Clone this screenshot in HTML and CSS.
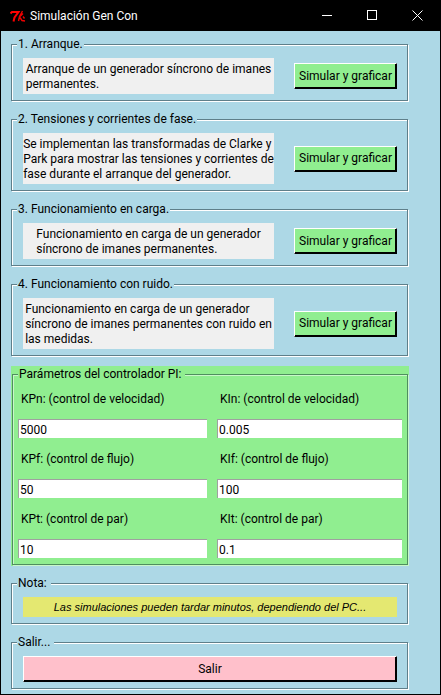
FILE: index.html
```html
<!DOCTYPE html>
<html lang="es">
<head>
    <meta charset="UTF-8">
    <meta name="viewport" content="width=device-width, initial-scale=1.0">
    <title>Simulación Gen Con</title>
    <link rel="stylesheet" href="styles.css">
</head>
<body>
    <div class="window">
        <header class="titlebar">
            <svg class="tk-icon" width="16" height="14" viewBox="0 0 16 14">
                <path d="M0.5 4.5 L2 3 L8.5 3 L4.5 8.5 L3.5 12.5" stroke="#f00" stroke-width="2" fill="none"/>
                <path d="M12.5 2 L9.5 7.5 L8.5 12 M10 7.5 L13 4.5 M10 8.5 L12 11.5 L15 12 M13 7.5 L14.5 9.5" stroke="#e00" stroke-width="1.4" fill="none"/>
            </svg>
            <span class="title-text">Simulación Gen Con</span>
            <div class="controls">
                <span class="control">
                    <svg width="11" height="11" viewBox="0 0 11 11"><path d="M0 5.5 H10" stroke="#fff" fill="none"/></svg>
                </span>
                <span class="control">
                    <svg width="11" height="11" viewBox="0 0 11 11"><rect x="0.5" y="0.5" width="9" height="9" stroke="#fff" fill="none"/></svg>
                </span>
                <span class="control">
                    <svg width="11" height="11" viewBox="0 0 11 11"><path d="M0.5 0.5 L10.5 10.5 M10.5 0.5 L0.5 10.5" stroke="#fff" fill="none"/></svg>
                </span>
            </div>
        </header>

        <main class="content">
            <section class="frame">
                <span class="frame-title">1. Arranque.</span>
                <div class="row">
                    <p class="msg"><span>Arranque de un generador síncrono de imanes<br>permanentes.</span></p>
                    <button class="btn-sim">Simular y graficar</button>
                </div>
            </section>

            <section class="frame">
                <span class="frame-title">2. Tensiones y corrientes de fase.</span>
                <div class="row">
                    <p class="msg"><span>Se implementan las transformadas de Clarke y<br>Park para mostrar las tensiones y corrientes de<br>fase durante el arranque del generador.</span></p>
                    <button class="btn-sim">Simular y graficar</button>
                </div>
            </section>

            <section class="frame">
                <span class="frame-title">3. Funcionamiento en carga.</span>
                <div class="row">
                    <p class="msg"><span>Funcionamiento en carga de un generador<br>síncrono de imanes permanentes.</span></p>
                    <button class="btn-sim">Simular y graficar</button>
                </div>
            </section>

            <section class="frame">
                <span class="frame-title">4. Funcionamiento con ruido.</span>
                <div class="row">
                    <p class="msg"><span>Funcionamiento en carga de un generador<br>síncrono de imanes permanentes con ruido en<br>las medidas.</span></p>
                    <button class="btn-sim">Simular y graficar</button>
                </div>
            </section>

            <div class="pi-panel">
                <section class="frame pi-frame">
                    <span class="frame-title pi-title">Parámetros del controlador PI:&nbsp;</span>
                    <div class="pi-grid">
                        <div class="param">
                            <label for="kpn">KPn: (control de velocidad)</label>
                            <input type="text" id="kpn" value="5000">
                        </div>
                        <div class="param">
                            <label for="kin">KIn: (control de velocidad)</label>
                            <input type="text" id="kin" value="0.005">
                        </div>
                        <div class="param">
                            <label for="kpf">KPf: (control de flujo)</label>
                            <input type="text" id="kpf" value="50">
                        </div>
                        <div class="param">
                            <label for="kif">KIf: (control de flujo)</label>
                            <input type="text" id="kif" value="100">
                        </div>
                        <div class="param">
                            <label for="kpt">KPt: (control de par)</label>
                            <input type="text" id="kpt" value="10">
                        </div>
                        <div class="param">
                            <label for="kit">KIt: (control de par)</label>
                            <input type="text" id="kit" value="0.1">
                        </div>
                    </div>
                </section>
            </div>

            <section class="frame">
                <span class="frame-title">Nota:&nbsp;</span>
                <p class="note">Las simulaciones pueden tardar minutos, dependiendo del PC...</p>
            </section>

            <section class="frame frame-last">
                <span class="frame-title">Salir...&nbsp;</span>
                <button class="btn-exit">Salir</button>
            </section>
        </main>
    </div>
</body>
</html>
```

FILE: styles.css
```css
* { box-sizing: border-box; }
html, body { margin: 0; padding: 0; }
body { font-family: Roboto, Arial, sans-serif; font-size: 12px; line-height: 15px; color: #000; }

.window { width: 441px; height: 695px; background-color: #add8e6; border: 1px solid #000; border-top: none; overflow: hidden; }

.titlebar { display: flex; align-items: center; height: 31px; background-color: #000; color: #fff; padding-left: 9px; }
.tk-icon { margin-right: 4px; }
.title-text { font-size: 12px; padding-top: 1px; }
.controls { display: flex; margin-left: auto; }
.control { display: flex; align-items: center; justify-content: center; width: 45px; height: 31px; }

.content { padding: 13px 32px 0 10px; }

.frame { position: relative; margin-bottom: 18px; padding: 13px 10px 6px 11px; border: 1px solid #5f7f8a; box-shadow: 1px 1px 0 #fff, inset 1px 1px 0 #fff; }
.frame-last { margin-bottom: 0; }
.frame-title { position: absolute; top: -8px; left: 5px; padding: 0 1px; background-color: #add8e6; white-space: nowrap; }

.row { display: flex; justify-content: space-between; align-items: center; }
.msg { display: flex; justify-content: center; width: 251px; margin: 0; padding: 4px 0 2px; background-color: #f0f0f0; white-space: nowrap; }

button { display: block; font-family: inherit; font-size: 12px; line-height: 15px; color: #000; padding: 0; border: 1px solid; border-color: #fff #000 #000 #fff; cursor: pointer; }
.btn-sim { width: 103px; height: 26px; background-color: #90ee90; box-shadow: inset -1px -1px 0 #000; }
.btn-exit { width: 374px; height: 26px; background-color: #ffc0cb; box-shadow: inset -1px -1px 0 #000; }

.pi-panel { margin: -8px -1px 17px 0; padding: 8px 1px 1px 1px; background-color: #90ee90; }
.pi-frame { margin-bottom: 0; padding: 17px 5px 6px 5px; border-color: #4f8f5f; box-shadow: 1px 1px 0 #c8f8c8, inset 1px 1px 0 #c8f8c8; }
.pi-title { background-color: #90ee90; left: 5px; }
.pi-grid { display: grid; grid-template-columns: 189px 185px; column-gap: 10px; row-gap: 14px; }
.param label { display: block; padding-left: 3px; margin-bottom: 12px; }
.param input { display: block; width: 100%; height: 19px; padding: 2px 1px 0; font-family: inherit; font-size: 12px; color: #000; background-color: #fff; border: none; border-top: 1px solid #a0a0a0; border-left: 1px solid #a0a0a0; border-radius: 0; outline: none; }

.note { margin: 0; height: 20px; line-height: 20px; background-color: #e4e871; text-align: center; font-family: "Liberation Sans", Arial, sans-serif; font-style: italic; font-size: 11px; }
```
